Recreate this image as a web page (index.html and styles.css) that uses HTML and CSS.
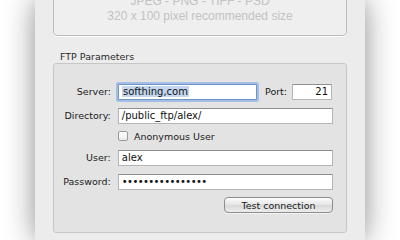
FILE: index.html
```html
<!DOCTYPE html>
<html lang="en">
<head>
    <meta charset="UTF-8">
    <title>FTP Parameters</title>
    <link rel="stylesheet" href="styles.css">
</head>
<body>
    <div class="window">
        <div class="dropzone">
            <div>JPEG - PNG - TIFF - PSD</div>
            <div>320 x 100 pixel recommended size</div>
        </div>

        <div class="group-title">FTP Parameters</div>
        <div class="group">
            <div class="row">
                <label class="label">Server:</label>
                <div class="field server focused"><span class="selected">softhing,com</span></div>
                <label class="port-label">Port:</label>
                <div class="field port">21</div>
            </div>
            <div class="row">
                <label class="label">Directory:</label>
                <div class="field wide">/public_ftp/alex/</div>
            </div>
            <div class="row check-row">
                <span class="checkbox"></span>
                <span>Anonymous User</span>
            </div>
            <div class="row">
                <label class="label">User:</label>
                <div class="field wide">alex</div>
            </div>
            <div class="row">
                <label class="label">Password:</label>
                <div class="field wide dots">••••••••••••••••</div>
            </div>
            <div class="actions">
                <button class="button">Test connection</button>
            </div>
        </div>
    </div>
</body>
</html>
```

FILE: styles.css
```css
* {
    margin: 0;
    padding: 0;
    box-sizing: border-box;
}

body {
    background: #ffffff;
    font-family: "DejaVu Sans", sans-serif;
    font-size: 9.5px;
    color: #1a1a1a;
    padding-left: 35px;
    height: 240px;
    overflow: hidden;
}

.window {
    width: 330px;
    height: 240px;
    background: #ececec;
    box-shadow: 0 0 28px rgba(0, 0, 0, 0.45);
    padding: 0 18px;
    overflow: hidden;
}

.dropzone {
    margin-top: -24px;
    height: 60px;
    background: #efefef;
    border: 1px solid #bcbcbc;
    border-radius: 4px;
    box-shadow: 0 1px 0 #ffffff;
    display: flex;
    flex-direction: column;
    justify-content: flex-end;
    align-items: center;
    padding-bottom: 11px;
    font-family: "Liberation Sans", sans-serif;
    font-size: 12px;
    line-height: 15px;
    color: #c2c2c2;
}

.group-title {
    margin: 15px 0 0 7px;
    line-height: 12px;
    height: 12px;
    color: #2a2a2a;
}

.group {
    height: 170px;
    background: #e3e3e3;
    border: 1px solid #c6c6c6;
    border-radius: 3px;
    padding: 19px 13px 0 0;
}

.row {
    display: flex;
    align-items: center;
    height: 17px;
    margin-bottom: 7px;
}

.label {
    width: 57px;
    text-align: right;
    margin-right: 7px;
}

.field {
    height: 16px;
    background: #ffffff;
    border: 1px solid #b4b4b4;
    border-top-color: #8e8e8e;
    padding: 0 3px;
    line-height: 14px;
    font-size: 10px;
    color: #111;
    white-space: nowrap;
    overflow: hidden;
}

.server {
    width: 139px;
}

.focused {
    border-color: #6f93c4;
    box-shadow: 0 0 0 2px #a3bfe3;
    border-radius: 1px;
}

.selected {
    background: #c3d6ee;
    padding: 0 1px;
}

.port-label {
    margin: 0 5px 0 8px;
}

.port {
    width: 40px;
    text-align: right;
}

.wide {
    width: 216px;
}

.dots {
    letter-spacing: -0.6px;
    font-size: 10px;
}

.check-row {
    padding-left: 64px;
    gap: 6px;
    height: 10px;
    margin-top: 3px;
    margin-bottom: 8px;
}

.checkbox {
    width: 10px;
    height: 10px;
    background: linear-gradient(#ffffff, #ececec);
    border: 1px solid #9a9a9a;
    border-radius: 2px;
}

.actions {
    display: flex;
    justify-content: flex-end;
    margin-top: 5px;
}

.button {
    width: 109px;
    height: 16px;
    font-family: "DejaVu Sans", sans-serif;
    font-size: 9.5px;
    color: #1a1a1a;
    background: linear-gradient(#fdfdfd, #e4e4e4 50%, #d8d8d8 51%, #ececec);
    border: 1px solid #8c8c8c;
    border-radius: 4px;
    box-shadow: 0 1px 0 rgba(255, 255, 255, 0.6);
}
```
